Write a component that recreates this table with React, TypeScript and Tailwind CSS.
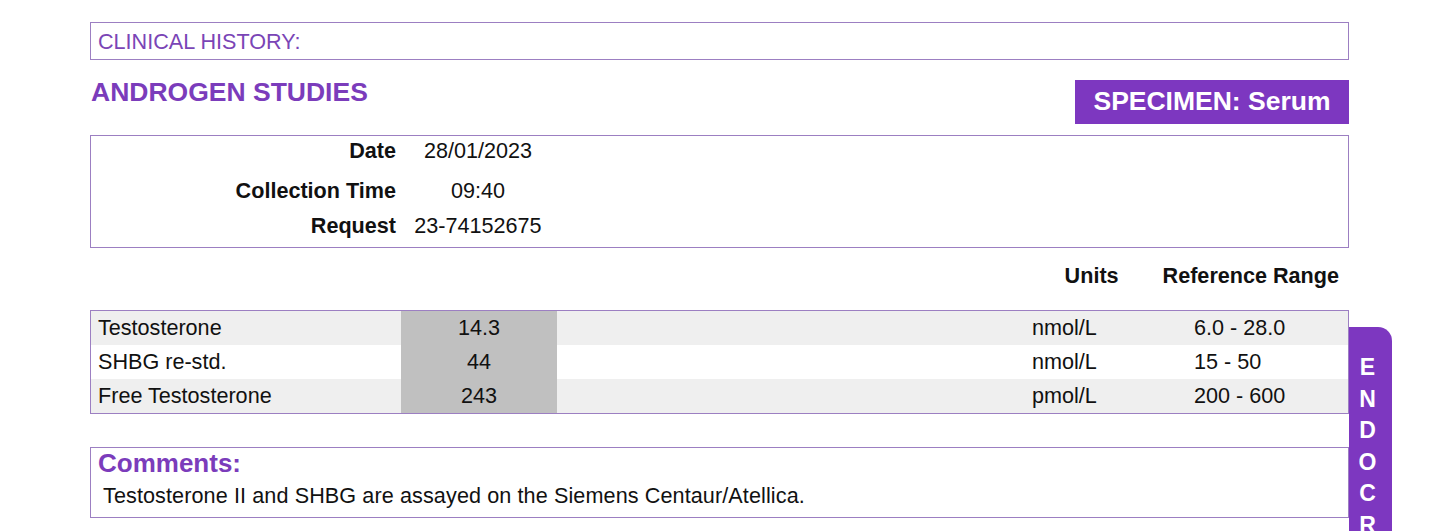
const rows = [
  { name: "Testosterone", result: "14.3", units: "nmol/L", range: "6.0 - 28.0", shaded: true },
  { name: "SHBG re-std.", result: "44", units: "nmol/L", range: "15 - 50", shaded: false },
  { name: "Free Testosterone", result: "243", units: "pmol/L", range: "200 - 600", shaded: true },
];

export default function App() {
  return (
    <div className="relative h-[531px] overflow-hidden bg-white font-['Liberation_Sans',Arial,sans-serif] text-[21.6px] text-[#111]">
      <div className="ml-[90px] w-[1259px] pt-[22px]">
        {/* clinical history */}
        <div className="flex h-[38px] items-center border border-[#9c7fc2] pl-[7px] pt-[2px] text-[#7a45b6]">
          CLINICAL HISTORY:
        </div>

        <div className="flex items-start justify-between">
          <h1 className="mt-[17px] pl-px text-[26.5px] font-bold leading-[30px] text-[#7b3cbb]">ANDROGEN STUDIES</h1>
          <div className="mt-[20px] flex h-[44px] w-[274px] items-center justify-center bg-[#7d37c0] text-[26.5px] font-bold text-white">
            SPECIMEN: Serum
          </div>
        </div>

        {/* request info */}
        <div className="mt-[11px] border border-[#9c7fc2] pb-[6px] leading-[30px]">
          <div className="grid grid-cols-[305px_136px] gap-x-[14px]">
            <div className="text-right font-bold">Date</div>
            <div className="text-center">28/01/2023</div>
          </div>
          <div className="mt-[10px] grid grid-cols-[305px_136px] gap-x-[14px]">
            <div className="text-right font-bold">Collection Time</div>
            <div className="text-center">09:40</div>
          </div>
          <div className="mt-[5px] grid grid-cols-[305px_136px] gap-x-[14px]">
            <div className="text-right font-bold">Request</div>
            <div className="text-center">23-74152675</div>
          </div>
        </div>

        {/* column headers */}
        <div className="flex h-[62px] justify-end gap-[44px] pr-[10px] pt-[13px] font-bold leading-[30px]">
          <span>Units</span>
          <span>Reference Range</span>
        </div>

        {/* results */}
        <div className="border border-[#9c7fc2]">
          {rows.map((r) => (
            <div
              key={r.name}
              className={`grid h-[34px] grid-cols-[310px_156px_475px_162px_1fr] items-stretch ${r.shaded ? "bg-[#efefef]" : "bg-white"}`}
            >
              <div className="flex items-center pl-[7px]">{r.name}</div>
              <div className="flex items-center justify-center bg-[#c0c0c0]">{r.result}</div>
              <div />
              <div className="flex items-center">{r.units}</div>
              <div className="flex items-center">{r.range}</div>
            </div>
          ))}
        </div>

        {/* comments */}
        <div className="mt-[33px] border border-[#9c7fc2] pb-[6px] leading-[30px]">
          <div className="pl-[7px] text-[26px] font-bold text-[#7b3cbb]">Comments:</div>
          <div className="mt-[3px] pl-[12px] tracking-[0.1px]">Testosterone II and SHBG are assayed on the Siemens Centaur/Atellica.</div>
        </div>
      </div>

      {/* side tab */}
      <div className="absolute left-[1349px] top-[327px] flex h-[320px] w-[43px] flex-col items-center rounded-tr-[14px] bg-[#7d37c0] pr-[6px] pt-[25px] text-[23px] font-bold leading-[31.5px] text-white">
        {"ENDOCR".split("").map((c, i) => (
          <span key={i}>{c}</span>
        ))}
      </div>
    </div>
  );
}
